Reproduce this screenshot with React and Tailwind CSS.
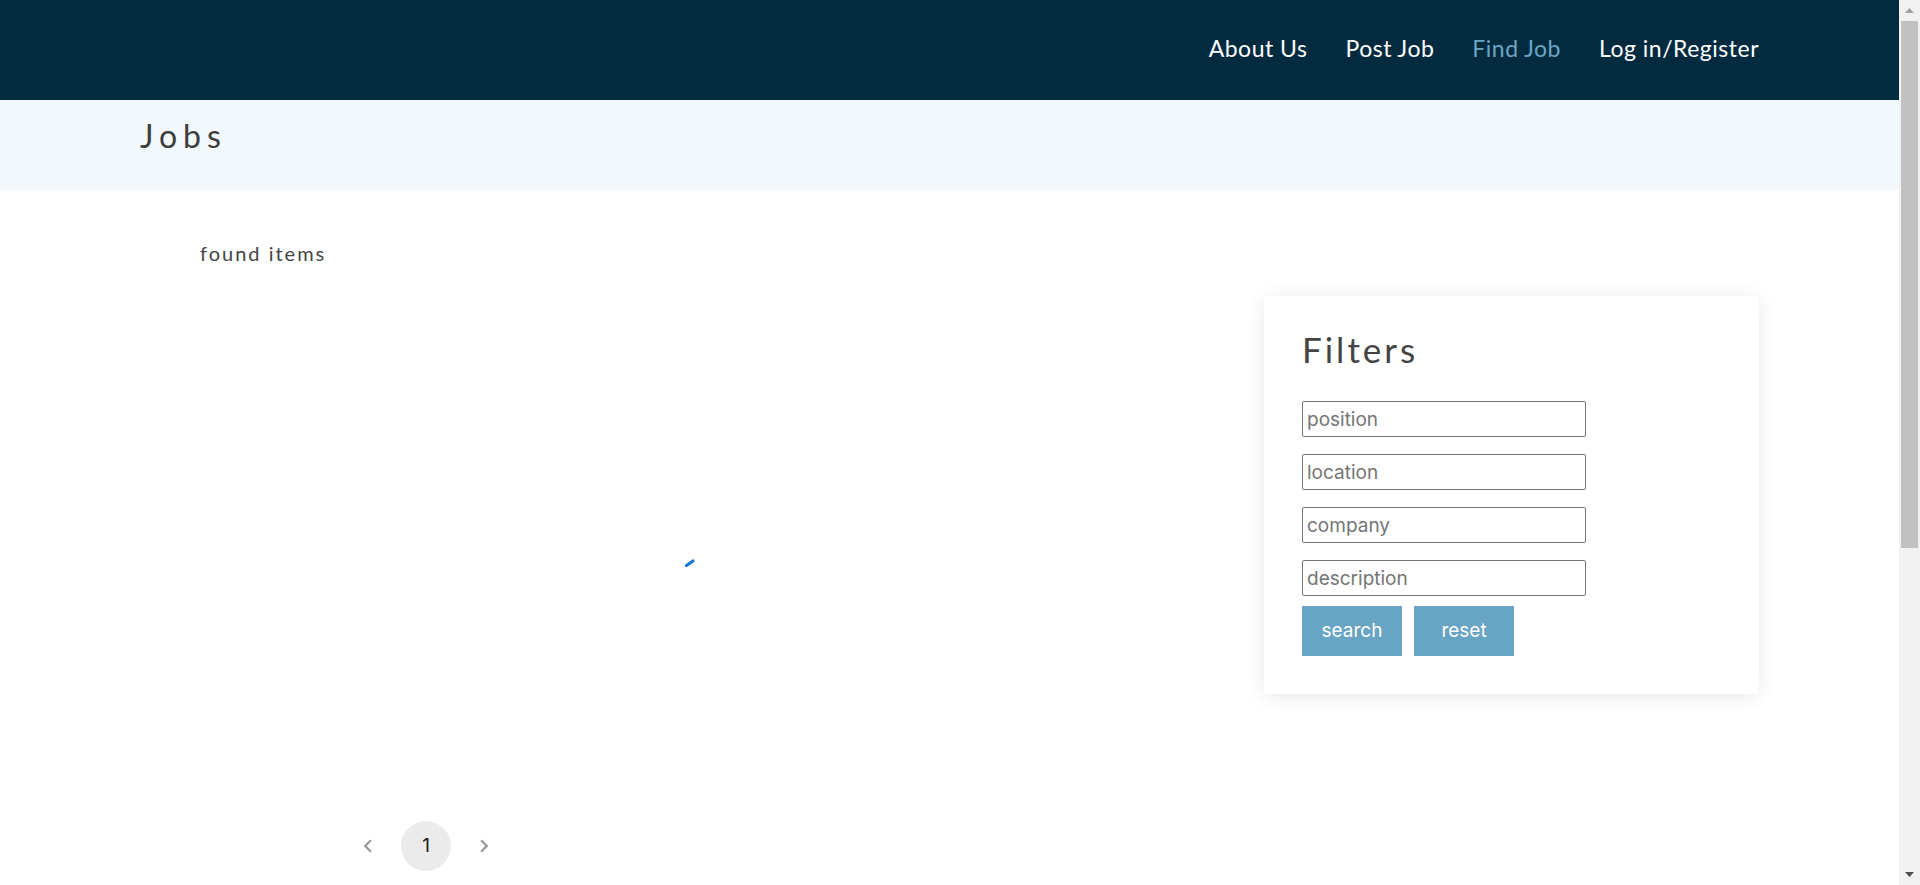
const NAV = [
  { label: 'About Us' },
  { label: 'Post Job' },
  { label: 'Find Job', active: true },
  { label: 'Log in/Register' },
];

const FILTERS = ['position', 'location', 'company', 'description'];

const round = { fontFamily: 'Lato, "Open Sans", sans-serif' };
const plain = { fontFamily: 'Inter, Roboto, sans-serif' };

function Navbar() {
  return (
    <header className="h-[100px] bg-[#022b40] flex items-center justify-end px-[140px] pb-[4px]" style={round}>
      <nav className="flex items-center gap-[38px] text-[23px] leading-none tracking-[0.5px]">
        {NAV.map(item => (
          <a key={item.label} href="#" className={item.active ? 'text-[#6ba6c6]' : 'text-white'}>
            {item.label}
          </a>
        ))}
      </nav>
    </header>
  );
}

function Spinner() {
  return (
    <svg width="12" height="10" viewBox="0 0 12 10">
      <line x1="2.5" y1="7.5" x2="9" y2="3" stroke="#1976d2" strokeWidth="3.2" strokeLinecap="round" />
    </svg>
  );
}

function Chevron({ dir }) {
  return (
    <svg width="26" height="26" viewBox="0 0 24 24" fill="#999">
      {dir === 'left'
        ? <path d="M15.41 7.41 14 6l-6 6 6 6 1.41-1.41L10.83 12z" />
        : <path d="M10 6 8.59 7.41 13.17 12l-4.58 4.59L10 18l6-6z" />}
    </svg>
  );
}

function Pagination() {
  return (
    <div className="flex items-center gap-[8px] pl-[203px]" style={plain}>
      <button className="w-[50px] h-[50px] flex items-center justify-center">
        <Chevron dir="left" />
      </button>
      <button className="w-[50px] h-[50px] rounded-full bg-[#ebebeb] flex items-center justify-center text-[19px] text-[#222]">
        1
      </button>
      <button className="w-[50px] h-[50px] flex items-center justify-center">
        <Chevron dir="right" />
      </button>
    </div>
  );
}

function FilterCard() {
  return (
    <aside className="self-start w-[495px] shrink-0 bg-white shadow-[0_2px_18px_rgba(0,0,0,0.09)] pl-[38px] pt-[36px] pb-[38px]">
      <h2 className="text-[35px] leading-none tracking-[3px] text-[#444] mb-[34px]" style={round}>Filters</h2>
      <form className="flex flex-col gap-[17px]" style={plain}>
        {FILTERS.map(f => (
          <input
            key={f}
            placeholder={f}
            className="w-[284px] h-[36px] border border-[#767676] rounded-[2px] px-[4px] text-[19px] text-[#333] placeholder:text-[#757575] outline-none"
          />
        ))}
      </form>
      <div className="flex gap-[12px] mt-[10px]" style={plain}>
        <button className="w-[100px] h-[50px] bg-[#68a4c4] text-white text-[19px]">search</button>
        <button className="w-[100px] h-[50px] bg-[#68a4c4] text-white text-[19px]">reset</button>
      </div>
    </aside>
  );
}

function Scrollbar() {
  return (
    <div className="w-[21px] shrink-0 bg-[#f1f1f1] flex flex-col">
      <div className="h-[21px] flex items-center justify-center">
        <svg width="9" height="5" viewBox="0 0 9 5"><polygon points="0,5 4.5,0 9,5" fill="#a3a3a3" /></svg>
      </div>
      <div className="px-[2px]">
        <div className="h-[527px] bg-[#c1c1c1]" />
      </div>
      <div className="flex-1" />
      <div className="h-[21px] flex items-center justify-center">
        <svg width="9" height="5" viewBox="0 0 9 5"><polygon points="0,0 9,0 4.5,5" fill="#505050" /></svg>
      </div>
    </div>
  );
}

export default function App() {
  return (
    <div className="h-[885px] flex overflow-hidden bg-white">
      <div className="flex-1 min-w-0">
        <Navbar />
        <section className="h-[90px] bg-[#f2f8fb] px-[140px] pt-[20px]">
          <h1 className="text-[32px] leading-none tracking-[6px] text-[#3d3d3d]" style={round}>Jobs</h1>
        </section>
        <main className="px-[140px] pt-[53px]">
          <p className="pl-[60px] text-[20px] leading-none tracking-[2px] text-[#444]" style={round}>found items</p>
          <div className="flex gap-[24px] mt-[33px]">
            <div className="flex-1">
              <div className="flex justify-center pt-[262px]">
                <Spinner />
              </div>
              <div className="mt-[253px]">
                <Pagination />
              </div>
            </div>
            <FilterCard />
          </div>
        </main>
      </div>
      <Scrollbar />
    </div>
  );
}
